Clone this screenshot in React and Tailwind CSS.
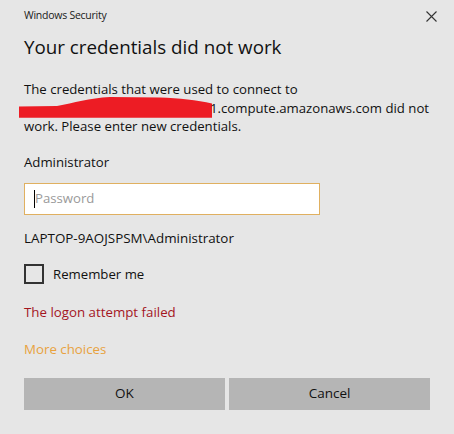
export default function App() {
  return (
    <div className="w-[454px] h-[434px] bg-[#e6e6e6] text-[#111] font-['Open_Sans',sans-serif] overflow-hidden">
      <div className="flex items-center justify-between h-[32px] pl-6 pr-[16px]">
        <span className="text-[10.5px] tracking-[-0.25px] text-[#1a1a1a]">Windows Security</span>
        <svg width="11" height="11" viewBox="0 0 11 11" className="mr-[1px]">
          <path d="M0.5 0.5L10.5 10.5M10.5 0.5L0.5 10.5" stroke="#333" strokeWidth="1.1" fill="none" />
        </svg>
      </div>
      <div className="px-6">
        <h1 className="text-[18.8px] leading-[28px] mt-[1px]">Your credentials did not work</h1>
        <div className="text-[13.2px] leading-[18.5px] mt-[19px] whitespace-nowrap">
          <p>The credentials that were used to connect to</p>
          <p className="relative">
            <svg width="193" height="24" viewBox="0 0 193 24" className="absolute -left-[5px] -top-[4px]">
              <path d="M0 11.5 L38 11 C55 8 70 3 91 2 L141 2.5 C160 3 178 5 193 8.5 L193 22.8 L0 22.8 Z" fill="#ed1c24" />
            </svg>
            <span className="inline-block w-[186px]"></span>
            <span className="relative">1.compute.amazonaws.com did not</span>
          </p>
          <p>work. Please enter new credentials.</p>
        </div>
        <div className="text-[13.2px] leading-[20px] mt-[16px]">Administrator</div>
        <div className="mt-[11px] w-[296px] h-[32px] bg-white border border-[#e0b060] flex items-center pl-[9px]">
          <span className="w-px h-[18px] bg-black"></span>
          <span className="text-[13.2px] text-[#9a9a9a]">Password</span>
        </div>
        <div className="text-[13.4px] leading-[20px] mt-[13px]">LAPTOP-9AOJSPSM\Administrator</div>
        <div className="flex items-center mt-[16px] gap-[9px]">
          <span className="w-[20px] h-[20px] border-2 border-[#333]"></span>
          <span className="text-[13.2px] leading-[20px]">Remember me</span>
        </div>
        <div className="text-[13.3px] leading-[20px] mt-[18px] text-[#a4161f]">The logon attempt failed</div>
        <div className="text-[13.3px] leading-[20px] mt-[17px] text-[#e8a23e]">More choices</div>
        <div className="flex gap-[4px] mt-[19px]">
          <button className="w-[201px] h-[32px] bg-[#b5b5b5] text-[13.5px] text-[#111]">OK</button>
          <button className="w-[201px] h-[32px] bg-[#b5b5b5] text-[13.5px] text-[#111]">Cancel</button>
        </div>
      </div>
    </div>
  );
}
